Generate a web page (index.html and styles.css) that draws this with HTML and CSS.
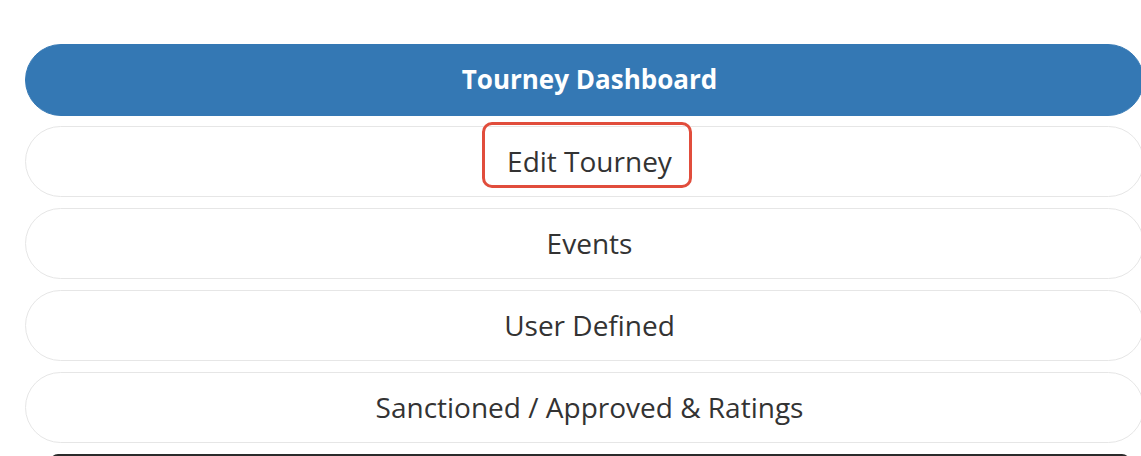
FILE: index.html
```html
<!DOCTYPE html>
<html>
<head>
<meta charset="utf-8">
<link rel="stylesheet" href="styles.css">
</head>
<body>
<nav class="menu">
  <a class="item active">Tourney Dashboard</a>
  <a class="item highlighted"><span class="label">Edit Tourney</span><span class="mark"></span></a>
  <a class="item">Events</a>
  <a class="item">User Defined</a>
  <a class="item">Sanctioned / Approved &amp; Ratings</a>
  <div class="next"></div>
</nav>
</body>
</html>
```
FILE: styles.css
```css
html, body {
  margin: 0;
  padding: 0;
  background: #ffffff;
  overflow: hidden;
}
body {
  width: 1141px;
  height: 456px;
  font-family: "Open Sans", "Noto Sans", sans-serif;
}
.menu {
  display: flex;
  flex-direction: column;
  gap: 11px;
  padding: 44px 0 0 25px;
  width: 1119px;
}
.item {
  box-sizing: border-box;
  height: 71px;
  border: 1px solid #e6e6e6;
  border-radius: 36px;
  display: flex;
  align-items: center;
  justify-content: center;
  padding-left: 10px;
  padding-bottom: 2px;
  font-size: 28px;
  font-weight: 500;
  color: #333333;
  position: relative;
}
.item.active {
  background: #3478b4;
  border-color: #3478b4;
  color: #ffffff;
  font-size: 26px;
  font-weight: 700;
  height: 72px;
  margin-bottom: -1px;
}
.mark {
  position: absolute;
  left: 456px;
  top: -5px;
  width: 210px;
  height: 66px;
  box-sizing: border-box;
  border: 3px solid #e14d3c;
  border-radius: 10px;
}
.next {
  height: 20px;
  margin: 0 14px 0 25px;
  background: #2b2b2b;
  border-radius: 8px 8px 0 0;
}
```
